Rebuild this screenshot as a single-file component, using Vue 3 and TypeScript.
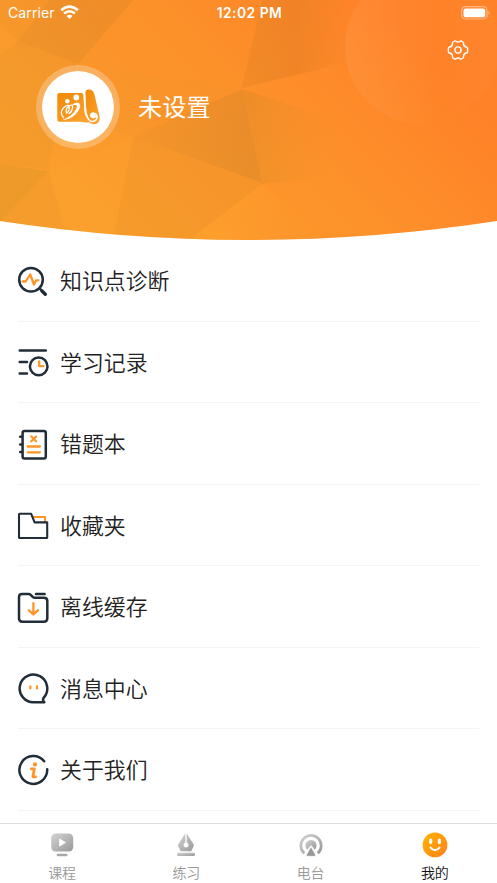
<script setup lang="ts">
interface MenuItem { id: string; label: string }
interface Tab { id: string; label: string }

const menu: MenuItem[] = [
  { id: 'diagnose', label: '知识点诊断' },
  { id: 'history', label: '学习记录' },
  { id: 'mistakes', label: '错题本' },
  { id: 'favorites', label: '收藏夹' },
  { id: 'offline', label: '离线缓存' },
  { id: 'messages', label: '消息中心' },
  { id: 'about', label: '关于我们' },
]

const tabs: Tab[] = [
  { id: 'course', label: '课程' },
  { id: 'practice', label: '练习' },
  { id: 'radio', label: '电台' },
  { id: 'mine', label: '我的' },
]
const activeTab = 'mine'
</script>

<template>
  <div class="screen">
    <header class="hero">
      <svg class="hero-bg" viewBox="0 0 497 241" aria-hidden="true">
        <defs>
          <linearGradient id="hero" gradientUnits="userSpaceOnUse" x1="130" y1="240" x2="370" y2="0">
            <stop offset="0" stop-color="#fb9e2d" />
            <stop offset=".55" stop-color="#fd912a" />
            <stop offset="1" stop-color="#ff8228" />
          </linearGradient>
          <linearGradient id="facetTop" gradientUnits="userSpaceOnUse" x1="245" y1="0" x2="350" y2="0">
            <stop offset="0" stop-color="#d67e22" stop-opacity=".3" />
            <stop offset=".5" stop-color="#dc7a22" stop-opacity=".4" />
            <stop offset="1" stop-color="#e07822" stop-opacity="0" />
          </linearGradient>
          <linearGradient id="facetMid" gradientUnits="userSpaceOnUse" x1="240" y1="140" x2="335" y2="150">
            <stop offset="0" stop-color="#cc8625" stop-opacity=".32" />
            <stop offset="1" stop-color="#e08a25" stop-opacity="0" />
          </linearGradient>
          <linearGradient id="facetLeft" gradientUnits="userSpaceOnUse" x1="133" y1="137" x2="262" y2="150">
            <stop offset="0" stop-color="#c07f27" stop-opacity=".12" />
            <stop offset="1" stop-color="#c07f27" stop-opacity=".34" />
          </linearGradient>
          <linearGradient id="facetCorner" gradientUnits="userSpaceOnUse" x1="20" y1="60" x2="110" y2="10">
            <stop offset="0" stop-color="#cc8225" stop-opacity=".26" />
            <stop offset="1" stop-color="#d47f25" stop-opacity=".32" />
          </linearGradient>
          <linearGradient id="facetBottom" gradientUnits="userSpaceOnUse" x1="230" y1="200" x2="310" y2="215">
            <stop offset="0" stop-color="#ffa32d" stop-opacity=".4" />
            <stop offset="1" stop-color="#ff9d2d" stop-opacity="0" />
          </linearGradient>
          <linearGradient id="bubble" x1="0" y1="0" x2="1" y2="0">
            <stop offset="0" stop-color="#fff" stop-opacity=".06" />
            <stop offset=".6" stop-color="#fff" stop-opacity="0" />
            <stop offset="1" stop-color="#fff" stop-opacity=".02" />
          </linearGradient>
          <clipPath id="curve"><path d="M0 0H497V221Q248.500 259 0 221Z" /></clipPath>
        </defs>
        <g clip-path="url(#curve)">
          <rect width="497" height="241" fill="url(#hero)" />
          <path d="M50 0H133L78 64 18 41Z" fill="url(#facetCorner)" />
          <path d="M0 0H50L18 41 0 25Z" fill="#df8c27" fill-opacity=".14" />
          <path d="M18 41 78 64 65 85 48 169 0 164V55Z" fill="#dd9028" fill-opacity=".2" />
          <path d="M0 164 48 171 0 222Z" fill="#d59228" fill-opacity=".34" />
          <path d="M48 171 68 241H0V222Z" fill="#dd9428" fill-opacity=".22" />
          <path d="M48 171 134 137 113 241H68Z" fill="#ffa62e" fill-opacity=".2" />
          <path d="M133 137 242 89 262 183Z" fill="url(#facetLeft)" />
          <path d="M133 137 262 184 188 241H113Z" fill="#dd9028" fill-opacity=".18" />
          <path d="M242 89 350 125V175L262 184Z" fill="url(#facetMid)" />
          <path d="M262 0H350V62L242 88Z" fill="url(#facetTop)" />
          <path d="M262 0H133L78 64 242 88Z" fill="#f58a28" fill-opacity=".1" />
          <path d="M78 64 242 88 133 137 80 120Z" fill="#ed9028" fill-opacity=".14" />
          <path d="M188 241 262 184 325 241Z" fill="url(#facetBottom)" />
          <circle cx="422" cy="47" r="77" fill="url(#bubble)" />
        </g>
      </svg>

      <div class="status">
        <div class="carrier">
          <span>Carrier</span>
          <svg width="19" height="14" viewBox="0 0 19 14" fill="none" stroke="#fff" stroke-width="2.600">
            <path d="M1.200 5.300Q9.500-2.200 17.800 5.300M4.100 8.500Q9.500 4 14.900 8.500" />
            <path d="M6.500 11Q9.500 8.300 12.500 11L9.500 13.900Z" fill="#fff" stroke="none" />
          </svg>
        </div>
        <span class="time">12:02 PM</span>
        <svg class="battery" width="30" height="14" viewBox="0 0 30 14">
          <rect x=".7" y=".7" width="25.300" height="12.300" rx="3.700" fill="none" stroke="#fff" stroke-opacity=".42" stroke-width="1.200" />
          <rect x="2.500" y="2.400" width="21.700" height="8.900" rx="2" fill="#fff" />
          <path d="M27.500 5Q29.500 6.900 27.500 8.800Z" fill="#fff" fill-opacity=".5" />
        </svg>
      </div>

      <div class="toolbar">
        <svg width="22" height="22" viewBox="0 0 22 22" fill="none" stroke="#fff" stroke-width="1.400" stroke-linejoin="round">
          <path d="M7.700 2Q8.500 1.700 9 2.200Q11 3.800 13 2.200Q13.500 1.700 14.300 2L16 3Q16.600 3.400 16.500 4.200Q16.300 7.300 19.300 8Q20.500 8.300 20.600 9.200V12.800Q20.500 13.700 19.300 14Q16.300 14.700 16.500 17.800Q16.600 18.600 16 19L14.300 20Q13.500 20.300 13 19.800Q11 18.200 9 19.800Q8.500 20.300 7.700 20L6 19Q5.400 18.600 5.500 17.800Q5.700 14.700 2.700 14Q1.500 13.700 1.400 12.800V9.200Q1.500 8.300 2.700 8Q5.700 7.300 5.500 4.200Q5.400 3.400 6 3Z" />
          <circle cx="11" cy="11" r="3.100" />
        </svg>
      </div>

      <div class="profile">
        <div class="avatar">
          <svg width="44" height="38" viewBox="0 0 44 38">
            <defs><linearGradient id="logo" x2=".7" y2="1"><stop stop-color="#f08805" /><stop offset="1" stop-color="#fda12e" /></linearGradient></defs>
            <path d="M3 5H25.500Q27.400 5 27.400 8L28.400 24Q29.500 31 36 34Q30 35 25 33.800H3Q1.300 33.800 1.300 32V8Q1.300 5 3 5Z" fill="url(#logo)" />
            <path d="M29.300 6Q29 1.800 32.500 1.500Q37 1.300 38.300 6L43.500 28Q44.800 36 37 36.200Q30 34 29.700 25Z" fill="url(#logo)" />
            <path d="M28.700 6Q28.500 34 36.500 33.500Q41.500 32.500 41 28.300Q40.300 25 37 25.300Q34.500 26 35.600 28.700Q37.700 30.300 39.500 28.500" fill="none" stroke="#fff" stroke-width="1.700" stroke-linecap="round" />
            <circle cx="36.600" cy="27" r="2.500" fill="#fff" />
            <circle cx="20.300" cy="9.500" r="2.900" fill="#fff" />
            <circle cx="11.300" cy="13.300" r="2.200" fill="#fff" />
            <path d="M7.500 29.500Q3.300 25 7 20.500Q11.500 15.500 13.200 18.500Q14 22.500 10.500 25Q9 20.500 13.500 17.500Q17.300 16 16.500 20Q15.500 24.500 12.800 25.500" fill="none" stroke="#fff" stroke-width="1.300" stroke-linecap="round" />
            <path d="M15 17.700Q20.500 12.800 23.500 15.500Q26 19.500 19.500 26.500Q14 31.500 6.500 32Q14.500 29 18.500 23.500Q22 18.500 20.500 17.300Q18 16.500 15 17.700Z" fill="#fff" />
          </svg>
        </div>
        <span class="nickname">未设置</span>
      </div>
    </header>

    <main class="menu">
      <div v-for="item in menu" :key="item.id" class="row">
        <svg class="row-icon" width="32" height="32" viewBox="0 0 32 32">
          <template v-if="item.id === 'diagnose'">
            <circle cx="14" cy="14.800" r="11.800" />
            <path d="M22.800 23.600 25 25.800" />
            <path d="M25 26 28.300 29.300" class="thick" />
            <path d="M5.700 16.500H8.700L13.200 9.500 17 19.500 19.200 15.300H21.400" class="accent" />
          </template>
          <template v-else-if="item.id === 'history'">
            <path d="M2.700 4.400H28.800M2.700 16H10M2.700 27.400H10" />
            <circle cx="21.700" cy="20.400" r="8.800" />
            <path d="M22.200 15.300V20.100H26.600" class="accent" />
          </template>
          <template v-else-if="item.id === 'mistakes'">
            <rect x="5.600" y="2.900" width="23.200" height="27.700" rx="2" />
            <path d="M3.200 8.800H5M3.200 16.400H5M3.200 24H5" />
            <path d="M14.300 8.500 19.100 13.300M19.100 8.500 14.300 13.300M10.800 18.500H22.900M10.800 24.300H22.900" class="accent" />
          </template>
          <template v-else-if="item.id === 'favorites'">
            <path d="M15.800 8H28V12.800" class="accent thin" />
            <path d="M2.600 4.800H14.200L17.600 13.400H30.200V28.500Q30.200 29 29.700 29H2.600Q2 29 2 28.400V5.400Q2 4.800 2.600 4.800Z" class="slim" />
          </template>
          <template v-else-if="item.id === 'offline'">
            <path d="M5 2.900H11.700Q12.600 2.900 13.200 3.500L16 6.100Q16.700 6.800 17.700 6.800H26.800Q30.300 6.800 30.300 10V27.200Q30.300 30.700 26.800 30.700H5.400Q2 30.700 2 27.200V6Q2 2.900 5 2.900Z" />
            <path d="M19 2.900H27.600" />
            <path d="M16.400 12.200V23.300M11.900 19.300 16.400 23.500 20.900 19.300" class="accent" />
          </template>
          <template v-else-if="item.id === 'messages'">
            <path d="M27.300 30.200H17.200A13.800 13.800 0 1 1 26.500 25.900Q25.300 28.700 27.300 30.200Z" />
            <path d="M13.300 14.500V16.400M20 14.500V16.400" class="accent" />
          </template>
          <template v-else>
            <path d="M27.200 7.300A13.900 13.900 0 1 0 30.200 15.200" />
            <circle cx="18" cy="10.400" r="2.100" class="accent-fill" />
            <path d="M14.400 14.900H17.300L15.900 22.900H18.600" class="accent heavy" />
          </template>
        </svg>
        <span class="row-label">{{ item.label }}</span>
      </div>
    </main>

    <nav class="tabs">
      <div v-for="tab in tabs" :key="tab.id" class="tab" :class="{ active: tab.id === activeTab }">
        <svg width="26" height="26" viewBox="0 0 26 26">
          <template v-if="tab.id === 'course'">
            <defs><linearGradient id="gray" x2="1" y2="1"><stop stop-color="#d3d3d3" /><stop offset="1" stop-color="#999" /></linearGradient></defs>
            <rect x="2.200" y="1.500" width="22" height="18" rx="4.500" fill="url(#gray)" />
            <path d="M10.200 7Q10.200 6.200 11 6.700L16.300 10Q17 10.500 16.300 11L11 14.300Q10.200 14.700 10.200 14Z" fill="#fff" />
            <rect x="7.700" y="21.700" width="10.800" height="2.500" rx="1.200" fill="#a8a8a8" />
          </template>
          <template v-else-if="tab.id === 'practice'">
            <path d="M12.300 1.500V10.600A2.500 2.500 0 1 0 13.700 10.600V1.500L20.600 12.200Q21 13 20.700 14L18.300 19.300H7.700L5.100 14Q4.700 13 5.300 12.200Z" fill="url(#gray)" />
            <rect x="4" y="20.800" width="18" height="3.300" rx="1.300" fill="url(#gray)" />
          </template>
          <template v-else-if="tab.id === 'radio'">
            <path d="M6.300 21.300A10.200 10.200 0 1 1 19.700 21.300" fill="none" stroke="url(#gray)" stroke-width="2.700" />
            <path d="M9.300 17.700A5.600 5.600 0 1 1 16.700 17.700L13.900 14Q13 13.200 12.100 14Z" fill="url(#gray)" />
            <path d="M12.300 15.800Q13 14.900 13.700 15.800L17.700 23Q18 24.200 16.800 24.300H9.200Q8 24.200 8.300 23Z" fill="#999" stroke="#fff" stroke-width=".7" />
          </template>
          <template v-else>
            <defs><linearGradient id="smile" x2="1" y2="1"><stop stop-color="#ffb300" /><stop offset="1" stop-color="#ff811e" /></linearGradient></defs>
            <circle cx="13" cy="12.900" r="12.400" fill="url(#smile)" />
            <path d="M8.700 8V10.500M17.300 8V10.500" stroke="#fff" stroke-width="3.100" stroke-linecap="round" />
            <path d="M8.600 15.600Q13 20.800 17.400 15.600" fill="none" stroke="#fff" stroke-width="2.200" stroke-linecap="round" />
          </template>
        </svg>
        <span>{{ tab.label }}</span>
      </div>
    </nav>
  </div>
</template>

<style>
body { margin: 0; background: #fff; }
</style>

<style scoped>
.screen {
  display: flex;
  flex-direction: column;
  width: 497px;
  height: 883px;
  overflow: hidden;
  background: #fff;
  font-family: Inter, "Noto Sans CJK SC", sans-serif;
}
.hero { position: relative; flex: none; height: 240px; color: #fff; }
.hero-bg { position: absolute; top: 0; left: 0; width: 497px; height: 241px; }
.status {
  position: relative;
  display: grid;
  grid-template-columns: 1fr auto 1fr;
  align-items: center;
  height: 26px;
  padding: 0 6px 0 8px;
  font-size: 14px;
  line-height: 26px;
}
.carrier { display: flex; align-items: center; gap: 5px; letter-spacing: .1px; }
.carrier svg { margin-top: -2px; }
.time { font-weight: 600; font-size: 13.800px; letter-spacing: .5px; }
.battery { justify-self: end; margin-top: -1px; }
.toolbar {
  position: relative;
  display: flex;
  justify-content: flex-end;
  height: 39px;
  box-sizing: border-box;
  padding: 13px 28px 0 0;
}
.profile { position: relative; display: flex; align-items: center; gap: 18px; padding-left: 36px; }
.avatar {
  display: flex;
  align-items: center;
  justify-content: center;
  width: 72px;
  height: 72px;
  border: 6px solid rgba(255, 255, 255, .25);
  border-radius: 50%;
  background: #fff;
  background-clip: padding-box;
}
.nickname { padding-top: 1px; font-size: 24.200px; line-height: 36px; font-weight: 400; }
.menu { flex: 1; min-height: 0; overflow: hidden; padding: 0 18px; }
.row {
  display: flex;
  align-items: center;
  box-sizing: border-box;
  height: 81.500px;
  gap: 11px;
  border-bottom: 1px solid #f4f4f4;
}
.row-icon {
  flex: none;
  margin-left: -1px;
  margin-top: 1px;
  fill: none;
  stroke: #222d3a;
  stroke-width: 2.500;
  stroke-linecap: round;
  stroke-linejoin: round;
}
.row-icon .thick { stroke-width: 3.400; }
.row-icon .slim { stroke-width: 2.100; }
.row-icon .accent { stroke: #ff9527; stroke-width: 2.300; }
.row-icon .accent.thin { stroke-width: 2; }
.row-icon .accent.heavy { stroke-width: 2.800; }
.row-icon .accent-fill { fill: #ff9527; stroke: none; }
.row-label { padding-top: 2px; color: #222; font-size: 21.900px; line-height: 32px; font-weight: 350; }
.tabs { display: flex; flex: none; height: 59px; border-top: 1px solid #dedede; background: #fff; }
.tab {
  display: flex;
  flex: 1;
  flex-direction: column;
  align-items: center;
  padding-top: 8px;
  color: #999;
  font-size: 14px;
  line-height: 20px;
  font-weight: 350;
}
.tab span { margin-top: 5px; }
.tab.active { color: #111; }
</style>
